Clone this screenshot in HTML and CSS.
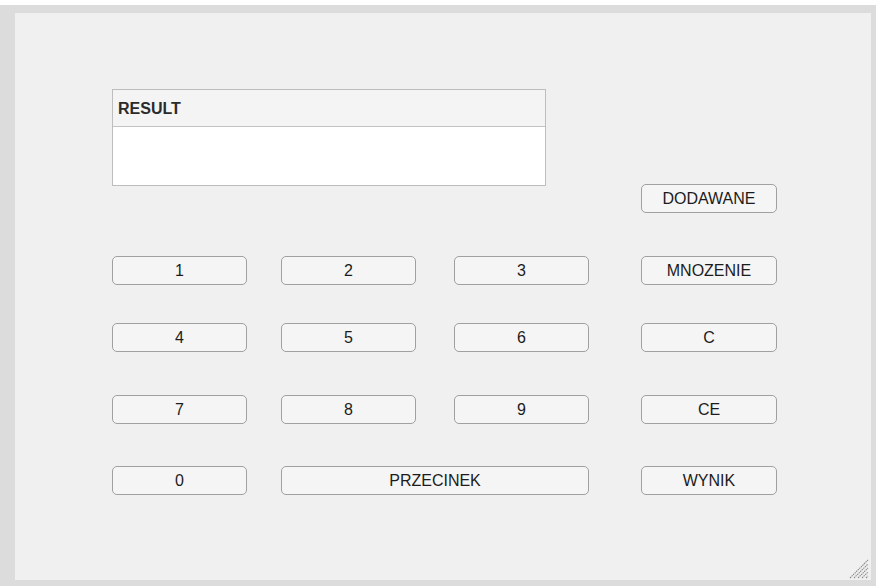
FILE: index.html
```html
<!DOCTYPE html>
<html lang="pl">
<head>
<meta charset="utf-8">
<title>Kalkulator</title>
<link rel="stylesheet" href="styles.css">
</head>
<body>
  <div class="frame">
    <div class="figure">
      <div class="calc">
        <section class="result">
          <div class="result-title">RESULT</div>
          <div class="result-body"></div>
        </section>

        <button class="btn op r-dod">DODAWANE</button>

        <button class="btn c1 r1">1</button>
        <button class="btn c2 r1">2</button>
        <button class="btn c3 r1">3</button>
        <button class="btn op r1">MNOZENIE</button>

        <button class="btn c1 r2">4</button>
        <button class="btn c2 r2">5</button>
        <button class="btn c3 r2">6</button>
        <button class="btn op r2">C</button>

        <button class="btn c1 r3">7</button>
        <button class="btn c2 r3">8</button>
        <button class="btn c3 r3">9</button>
        <button class="btn op r3">CE</button>

        <button class="btn c1 r4">0</button>
        <button class="btn c2-3 r4">PRZECINEK</button>
        <button class="btn op r4">WYNIK</button>
      </div>

      <svg class="grip" width="20" height="20" viewBox="0 0 20 20" aria-hidden="true">
        <g stroke="#8a8a8a" stroke-width="1.1" stroke-dasharray="1.5 0.7">
          <line x1="1" y1="19" x2="19" y2="1"/>
          <line x1="5" y1="19" x2="19" y2="5"/>
          <line x1="9" y1="19" x2="19" y2="9"/>
          <line x1="13" y1="19" x2="19" y2="13"/>
          <line x1="17" y1="19" x2="19" y2="17"/>
        </g>
      </svg>
    </div>
  </div>
</body>
</html>
```

FILE: styles.css
```css
html, body {
  margin: 0;
  padding: 0;
  background: #ffffff;
}

body {
  padding-top: 5px;
  font-family: "Liberation Sans", Arial, sans-serif;
}

.frame {
  box-sizing: border-box;
  width: 876px;
  height: 581px;
  background: #dcdcdc;
  padding: 8px 5px 6px 15px;
}

.figure {
  position: relative;
  box-sizing: border-box;
  width: 856px;
  height: 567px;
  background: #f0f0f0;
  padding: 76px 0 0 97px;
}

.calc {
  display: grid;
  grid-template-columns: 135px 34px 135px 38px 135px 52px 136px;
  grid-template-rows: 95px 29px 43px 29px 38px 29px 43px 29px 42px 29px;
}

/* result panel */
.result {
  grid-column: 1 / 6;
  grid-row: 1 / 3;
  justify-self: start;
  align-self: start;
  box-sizing: border-box;
  width: 434px;
  height: 97px;
  border: 1px solid #bdbdbd;
  background: #ffffff;
  display: flex;
  flex-direction: column;
}

.result-title {
  box-sizing: border-box;
  height: 37px;
  padding: 0 5px;
  background: #f4f4f4;
  border-bottom: 1px solid #c4c4c4;
  font-weight: bold;
  font-size: 16px;
  line-height: 37px;
  color: #2b2b2b;
}

.result-body {
  flex: 1;
  background: #ffffff;
}

/* buttons */
.btn {
  box-sizing: border-box;
  height: 29px;
  margin: 0;
  padding: 0;
  border: 1px solid #a0a0a0;
  border-radius: 5px;
  background: #f5f5f5;
  font-family: "Liberation Sans", Arial, sans-serif;
  font-size: 16px;
  color: #1c1c1c;
  line-height: 27px;
  text-align: center;
}

.c1 { grid-column: 1; }
.c2 { grid-column: 3; }
.c3 { grid-column: 5; }
.c2-3 { grid-column: 3 / 6; }
.op { grid-column: 7; }

.r-dod { grid-row: 2; }
.r1 { grid-row: 4; }
.r2 { grid-row: 6; }
.r3 { grid-row: 8; }
.r4 { grid-row: 10; }

/* resize grip in the window corner */
.grip {
  position: absolute;
  right: 2px;
  bottom: 1px;
}
```
